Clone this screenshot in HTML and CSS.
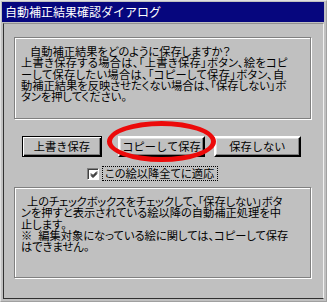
FILE: index.html
```html
<!DOCTYPE html>
<html lang="ja">
<head>
  <meta charset="utf-8">
  <title>自動補正結果確認ダイアログ</title>
  <link rel="stylesheet" href="styles.css">
</head>
<body>
<div class="window">
  <div class="title">自動補正結果確認ダイアログ</div>
  <div class="client">
    <div class="message message-top">
      <p><span class="indent-2"></span>自動補正結果をどのように保存しますか？</p>
      <p class="wide">上書き保存する場合は、「上書き保存」ボタン、絵をコピ</p>
      <p class="wide">ーして保存したい場合は、「コピーして保存」ボタン、自</p>
      <p>動補正結果を反映させたくない場合は、「保存しない」ボ</p>
      <p>タンを押してください。</p>
    </div>
    <div class="buttons">
      <button class="btn btn-default btn-overwrite">上書き保存</button>
      <button class="btn btn-copy">コピーして保存</button>
      <button class="btn btn-nosave">保存しない</button>
    </div>
    <div class="check-row">
      <span class="checkbox">
        <svg width="8" height="8" viewBox="0 0 8 8"><path d="M1 3.5 L3 5.5 L7 1.5 M1 4.5 L3 6.5 L7 2.5 M1 5.5 L3 7.5 L7 3.5" fill="none" stroke="#000" stroke-width="1"/></svg>
      </span>
      <label class="check-label">この絵以降全てに適応</label>
    </div>
    <div class="message message-bottom">
      <p class="tight"><span class="indent-1"></span>上のチェックボックスをチェックして、「保存しない」ボタ</p>
      <p>ンを押すと表示されている絵以降の自動補正処理を中</p>
      <p>止します。</p>
      <p>※<span class="indent-1"></span>編集対象になっている絵に関しては、コピーして保存</p>
      <p>はできません。</p>
    </div>
    <div class="highlight"></div>
  </div>
</div>
</body>
</html>
```

FILE: styles.css
```css
body {
  margin: 0;
  background: #c0c0c0;
  font-family: "Noto Sans CJK JP", "Noto Sans", sans-serif;
  font-size: 11.25px;
  font-feature-settings: "palt";
  color: #000;
}
p {
  margin: 0;
  white-space: nowrap;
}
.wide {
  letter-spacing: 0.3px;
}
.tight {
  letter-spacing: -0.15px;
}
.window {
  width: 327px;
  height: 302px;
  box-sizing: border-box;
  background: #c0c0c0;
  border: 1px solid;
  border-color: #e0e0e0 #a0a0a0 #a0a0a0 #e0e0e0;
  padding: 1px 2px 2px 1px;
  display: flex;
  flex-direction: column;
}
.title {
  height: 20px;
  flex: none;
  background: #06067e;
  color: #fff;
  font-size: 12px;
  line-height: 20px;
  padding-left: 3px;
  font-feature-settings: normal;
}
.client {
  position: relative;
  flex: 1;
  margin-top: 1px;
  margin-left: 1px;
  border: 1px solid;
  border-color: #909090 #f0f0f0 #303030 #303030;
  padding: 13px 0 0 10px;
  display: flex;
  flex-direction: column;
}
.message {
  width: 297px;
  box-sizing: border-box;
  border: 1px solid #808080;
  box-shadow: 1px 1px 0 #fff, inset 1px 1px 0 #fff;
  padding: 8px 0 0 6px;
  line-height: 11.25px;
}
.message-top {
  height: 82px;
}
.message-bottom {
  height: 91px;
  margin-top: 6px;
}
.indent-2 {
  display: inline-block;
  width: 9px;
}
.indent-1 {
  display: inline-block;
  width: 6px;
}
.buttons {
  display: flex;
  margin-top: 17px;
  padding-left: 8px;
  height: 21px;
}
.btn {
  box-sizing: border-box;
  height: 21px;
  padding: 0;
  margin: 0;
  font-family: inherit;
  font-size: 11.25px;
  line-height: 15px;
  color: #000;
  background: #c0c0c0;
  border: 2px solid;
  border-color: #fff #000 #000 #fff;
  box-shadow: inset -1px -1px 0 #808080, inset 1px 1px 0 #dfdfdf;
}
.btn-default {
  border: 1px solid #000;
  box-shadow: inset 1px 1px 0 #fff, inset -1px -1px 0 #000, inset -2px -2px 0 #808080;
}
.btn-overwrite {
  width: 80px;
}
.btn-copy {
  width: 87px;
  margin-left: 16px;
}
.btn-nosave {
  width: 87px;
  margin-left: 9px;
}
.check-row {
  display: flex;
  align-items: center;
  height: 15px;
  margin-top: 9px;
  padding-left: 73px;
}
.checkbox {
  width: 12px;
  height: 12px;
  box-sizing: border-box;
  background: #fff;
  border: 1px solid;
  border-color: #808080 #fff #fff #808080;
  box-shadow: inset 1px 1px 0 #404040;
  display: flex;
  align-items: center;
  justify-content: center;
  padding: 1px 0 0 1px;
}
.checkbox svg {
  display: block;
}
.check-label {
  margin-left: 3px;
  border: 1px dotted #000;
  height: 15px;
  box-sizing: border-box;
  line-height: 13px;
  padding: 0 3px 0 2px;
}
.highlight {
  position: absolute;
  left: 103px;
  top: 97px;
  width: 109px;
  height: 41px;
  box-sizing: border-box;
  border: 5px solid #ec0a0a;
  border-radius: 50%;
}
```
